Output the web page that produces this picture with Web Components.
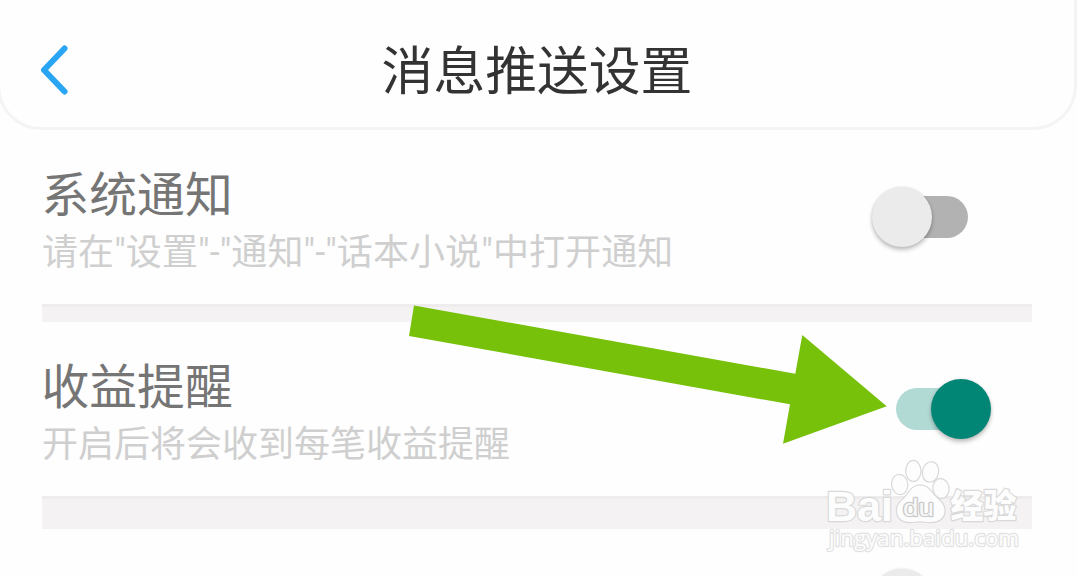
<!DOCTYPE html>
<html lang="zh-CN">
<head>
<meta charset="utf-8">
<title>消息推送设置</title>
<style>
  body {
    margin: 0;
    height: 576px;
    overflow: hidden;
    background: #fefefe;
    font-family: Roboto, "Noto Sans CJK SC", sans-serif;
  }
  .quoted { letter-spacing: 0.1px; }
</style>
</head>
<body>
<settings-page>
  <page-header slot="header">消息推送设置</page-header>
  <setting-row>
    系统通知
    <span slot="hint" class="quoted">请在"设置"-"通知"-"话本小说"中打开通知</span>
    <toggle-switch slot="control"></toggle-switch>
  </setting-row>
  <section-divider></section-divider>
  <setting-row>
    收益提醒
    <span slot="hint">开启后将会收到每笔收益提醒</span>
    <toggle-switch slot="control" checked></toggle-switch>
  </setting-row>
  <section-divider size="large"></section-divider>
  <setting-row compact>
    <toggle-switch slot="control"></toggle-switch>
  </setting-row>
  <pointer-arrow slot="overlay"></pointer-arrow>
  <site-watermark slot="overlay"></site-watermark>
</settings-page>

<script>
class SettingsPage extends HTMLElement {
  constructor() {
    super();
    const shadow = this.attachShadow({ mode: 'open' });
    shadow.innerHTML = `
      <style>
        :host {
          display: block;
          position: relative;
          width: 1077px;
          height: 576px;
          overflow: hidden;
        }
        main {
          display: flex;
          flex-direction: column;
          padding: 0 45px 0 42px;
        }
      </style>
      <slot name="header"></slot>
      <main><slot></slot></main>
      <slot name="overlay"></slot>
    `;
  }
}

class PageHeader extends HTMLElement {
  constructor() {
    super();
    const shadow = this.attachShadow({ mode: 'open' });
    shadow.innerHTML = `
      <style>
        :host {
          display: grid;
          grid-template-columns: 120px 1fr 120px;
          align-items: center;
          box-sizing: border-box;
          height: 130px;
          margin-left: -3px;
          padding-top: 13px;
          border: 3px solid #f4f4f4;
          border-top: none;
          border-radius: 0 0 44px 44px;
          color: #333;
        }
        svg { display: block; margin-left: 36px; }
        h1 {
          margin: 0;
          padding-top: 6px;
          font-size: 51.8px;
          font-weight: 400;
          line-height: 60px;
          text-align: center;
        }
      </style>
      <svg width="36" height="56" viewBox="0 0 36 56" fill="none" stroke="#2aa5f4"
           stroke-width="6" stroke-linecap="round" stroke-linejoin="round">
        <path d="M28.5 6.5 8 28l20.500 21.500"/>
      </svg>
      <h1><slot></slot></h1>
    `;
  }
}

class SettingRow extends HTMLElement {
  constructor() {
    super();
    const shadow = this.attachShadow({ mode: 'open' });
    shadow.innerHTML = `
      <style>
        :host {
          display: flex;
          flex: none;
          justify-content: space-between;
          align-items: center;
          box-sizing: border-box;
          height: 174px;
          padding-right: 40px;
        }
        :host([compact]) { height: 140px; }
        .text { padding-top: 12px; }
        .title {
          margin: -1px 0 1px -0.5px;
          color: #757575;
          font-size: 47.800px;
          line-height: 60px;
        }
        .hint {
          color: #cfcfcf;
          font-size: 36px;
          line-height: 52px;
          white-space: nowrap;
        }
      </style>
      <div class="text">
        <div class="title"><slot></slot></div>
        <div class="hint"><slot name="hint"></slot></div>
      </div>
      <slot name="control"></slot>
    `;
  }
}

class ToggleSwitch extends HTMLElement {
  constructor() {
    super();
    const shadow = this.attachShadow({ mode: 'open' });
    shadow.innerHTML = `
      <style>
        :host {
          display: flex;
          align-items: center;
          justify-content: center;
          flex: none;
          width: 120px;
          height: 60px;
        }
        .track {
          display: flex;
          align-items: center;
          width: 72px;
          height: 42px;
          border-radius: 21px;
          background: #b2b2b2;
        }
        .thumb {
          flex: none;
          width: 60px;
          height: 60px;
          margin-left: -24px;
          border-radius: 50%;
          background: #ebebeb;
          box-shadow: 0 3px 4px rgba(0, 0, 0, 0.24), 0 0 3px rgba(0, 0, 0, 0.1);
        }
        :host([checked]) .track { background: #b2dad5; }
        :host([checked]) .thumb {
          margin-left: 35.400px;
          background: #018575;
        }
      </style>
      <div class="track"><div class="thumb"></div></div>
    `;
  }
}

class SectionDivider extends HTMLElement {
  constructor() {
    super();
    const shadow = this.attachShadow({ mode: 'open' });
    shadow.innerHTML = `
      <style>
        :host {
          display: block;
          flex: none;
          box-sizing: border-box;
          width: 990px;
          height: 18px;
          border-top: 3px solid #eeecec;
          background: #f4f2f3;
        }
        :host([size="large"]) { height: 33px; }
      </style>
    `;
  }
}

class PointerArrow extends HTMLElement {
  constructor() {
    super();
    const shadow = this.attachShadow({ mode: 'open' });
    shadow.innerHTML = `
      <style>
        :host { position: absolute; left: 409px; top: 305px; }
        svg { display: block; }
      </style>
      <svg width="478" height="139" viewBox="409 305 478 139">
        <path fill="#77c10b" d="M414 305.500 795.300 373.800 802.300 335 886.700 406.300 783 443.800 790 404.300 409 336z"/>
      </svg>
    `;
  }
}

class SiteWatermark extends HTMLElement {
  constructor() {
    super();
    const shadow = this.attachShadow({ mode: 'open' });
    shadow.innerHTML = `
      <style>
        :host { position: absolute; left: 820px; top: 455px; }
        svg { display: block; }
        text, .paw {
          fill: #fdfdfd;
          stroke: #d9d9d9;
          stroke-width: 2.400px;
          stroke-linejoin: round;
          paint-order: stroke;
        }
        .paw { stroke-width: 2.400px; }
        .brand { font-family: "Liberation Sans", sans-serif; font-weight: 700; }
        .cjk { font-family: "Noto Sans CJK SC", sans-serif; font-weight: 900; }
        .url { font-family: "Open Sans", sans-serif; font-weight: 500; stroke: #e2e2e2; }
        .du { font-weight: 400; fill: #f8f8f8; stroke: #cbcbcb; }
      </style>
      <svg width="210" height="105" viewBox="820 455 210 105">
        <text class="brand" x="826" y="520.500" font-size="43" textLength="67" lengthAdjust="spacingAndGlyphs">Bai</text>
        <g class="paw">
          <ellipse cx="899.700" cy="484.500" rx="7.500" ry="9.500" transform="rotate(-8 899.700 484.500)"/>
          <ellipse cx="913.300" cy="471" rx="7" ry="10"/>
          <ellipse cx="930.500" cy="472" rx="7.500" ry="9.700" transform="rotate(12 930.500 472)"/>
          <ellipse cx="941" cy="488.500" rx="7.500" ry="9.300" transform="rotate(-8 941 488.500)"/>
          <path d="M920 485.500c-7 0-9.500 5-13 9.500-4.500 5.500-10 8.500-10 15.500 0 8 6 11.500 12.500 11.500 4 0 7-.8 10.500-.8s6.500.8 10.500.8c7 0 14-3 14-11.500 0-7-6-10.500-10.500-15.500-4-4.800-7-9.500-14-9.500z"/>
        </g>
        <text class="brand du" x="903" y="515.500" font-size="23" textLength="31" lengthAdjust="spacingAndGlyphs">du</text>
        <text class="cjk" x="950.500" y="518" font-size="33">经验</text>
        <text class="url" x="829" y="546" font-size="22" textLength="190" lengthAdjust="spacingAndGlyphs">jingyan.baidu.com</text>
      </svg>
    `;
  }
}

customElements.define('settings-page', SettingsPage);
customElements.define('page-header', PageHeader);
customElements.define('setting-row', SettingRow);
customElements.define('toggle-switch', ToggleSwitch);
customElements.define('section-divider', SectionDivider);
customElements.define('pointer-arrow', PointerArrow);
customElements.define('site-watermark', SiteWatermark);
</script>
</body>
</html>
